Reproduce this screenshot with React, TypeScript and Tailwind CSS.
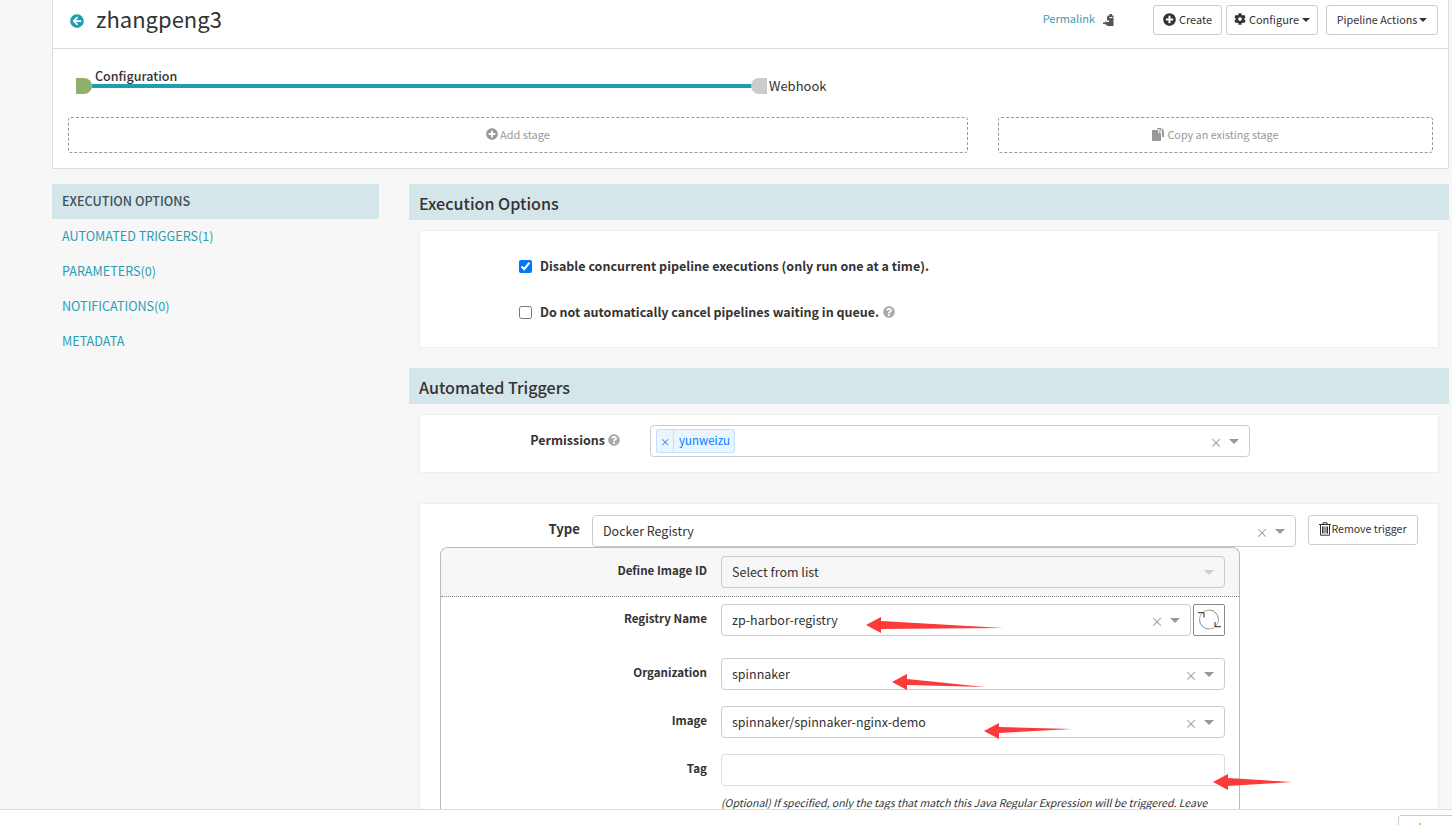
import React from "react";
import { FaArrowCircleLeft, FaPlusCircle, FaCog, FaQuestionCircle } from "react-icons/fa";

const font = { fontFamily: '"Noto Sans CJK SC", "Noto Sans", sans-serif' };

function Clear() {
  return <span className="text-[13px] leading-none text-[#999] w-[10px] flex justify-center">×</span>;
}

function Tri({ light }: { light?: boolean }) {
  return <span className={`w-0 h-0 border-x-[5px] border-x-transparent border-t-[5px] ${light ? "border-t-[#ccc]" : "border-t-[#999]"}`} />;
}

function Caret() {
  return <span className="w-0 h-0 mt-[2px] border-x-[4px] border-x-transparent border-t-[4px] border-t-[#333]" />;
}

function Select({ value, width, disabled, clearable = true }: { value: string; width: string; disabled?: boolean; clearable?: boolean }) {
  return (
    <div className={`${width} h-[32px] shrink-0 flex items-center pl-[10px] pr-[10px] gap-[8px] rounded-[4px] border border-[#ccc] text-[12.5px] text-[#333] ${disabled ? "bg-[#f7f7f7]" : "bg-white"}`}>
      <span className="flex-1 truncate">{value}</span>
      {clearable && <Clear />}
      <Tri light={disabled} />
    </div>
  );
}

function Label({ children, className = "" }: { children: React.ReactNode; className?: string }) {
  return <div className={`text-[11.6px] font-bold text-[#333] text-right ${className}`}>{children}</div>;
}

function Button({ children, className = "" }: { children: React.ReactNode; className?: string }) {
  return (
    <div className={`h-[30px] shrink-0 pb-[2px] flex items-center justify-center rounded-[3px] border border-[#ccc] bg-white text-[11px] text-[#333] ${className}`}>
      {children}
    </div>
  );
}

function SectionHeader({ children }: { children: React.ReactNode }) {
  return <div className="h-[36px] pt-[2px] flex items-center pl-[10px] bg-[#d5e6ea] text-[16.1px] font-medium text-[#333]">{children}</div>;
}

function Card({ children, className = "" }: { children: React.ReactNode; className?: string }) {
  return <div className={`mx-[10px] bg-white border border-[#eee] ${className}`}>{children}</div>;
}

function Trash() {
  return (
    <svg width="12" height="14" viewBox="0 0 12 14" fill="none" stroke="#333" strokeWidth="1">
      <path d="M0 2.5h12M4 2.5V.8h4v1.7M1.5 2.5v10.7h9V2.5M3.5 4.5v7M5 4.5v7M7 4.5v7M8.5 4.5v7" />
    </svg>
  );
}

function Refresh() {
  return (
    <svg width="24" height="24" viewBox="0 0 24 24" fill="none">
      <path d="M12 2a9.5 9.5 0 0 1 9.5 9.5" stroke="#7d8c9c" strokeWidth="1" />
      <path d="M21.5 11.5A9.5 9.5 0 0 1 12 21" stroke="#d9a05b" strokeWidth="1" />
      <path d="M12 21a9.5 9.5 0 0 1-9.5-9.5" stroke="#6a8fb5" strokeWidth="1" />
      <path d="M2.5 11.5A9.5 9.5 0 0 1 12 2" stroke="#d9a05b" strokeWidth="1" />
      <path d="M1 4.7h6v4.8M24 18.7h-6v-4.7" stroke="#223" strokeWidth="1" />
    </svg>
  );
}

function ClipboardArrow() {
  return (
    <svg width="12" height="12" viewBox="0 0 12 12">
      <path d="M5 1.5h1.5V0h2.5v1.5h1.5V12H4V8h2V6.5H4V3z" fill="#555" />
      <path d="M0 8.5h2.5V7L5.5 9.2 2.5 11.4V10H0z" fill="#555" />
      <path d="M6.5 3.5h3" stroke="#fff" strokeWidth="1" />
    </svg>
  );
}

function CopyPages() {
  return (
    <svg width="13" height="13" viewBox="0 0 13 13" fill="#999">
      <path d="M0 2h6v3h3v8H0z" />
      <path d="M6.7 2 9 4.4H6.7z" />
      <path d="M5 0h4v2.6h3V9h-2V4L7 1.3H5z" />
      <path d="M9.7 0 12 2H9.7z" />
    </svg>
  );
}

function Panel() {
  return (
    <div className="bg-white border border-t-0 border-[#ddd]">
      <div className="h-[49px] border-b border-[#ddd] flex items-center pl-[17px] pr-[10px] pb-[8px]">
        <FaArrowCircleLeft className="text-[#209db5] mt-[1px]" size={14} />
        <span className="ml-[12px] text-[22px] text-[#333] leading-none mb-[4px]">zhangpeng3</span>
        <span className="ml-auto text-[11px] text-[#3a9db2] -mt-[4px]">Permalink</span>
        <span className="ml-[8px] mr-[38px] -mt-[1px] flex"><ClipboardArrow /></span>
        <div className="flex">
          <Button className="w-[69px] gap-[3px]"><FaPlusCircle size={13} />Create</Button>
          <Button className="w-[92px] ml-[4px] gap-[3px]"><FaCog size={12} />Configure<Caret /></Button>
          <Button className="w-[112px] ml-[8px] gap-[2px]"><span className="text-[10.8px]">Pipeline Actions</span><Caret /></Button>
        </div>
      </div>
      <div className="relative h-[68px]">
        <span className="absolute left-[42px] top-[18px] text-[12.5px] font-medium leading-[17px] text-[#333]">Configuration</span>
        <span className="absolute left-[23px] top-[29px] w-[16px] h-[16px] bg-[#8fb06d] rounded-r-full" />
        <span className="absolute left-[39px] top-[35px] w-[660px] h-[4px] bg-[#209db5]" />
        <span className="absolute left-[698px] top-[29px] w-[16px] h-[16px] bg-[#ccc] rounded-l-full" />
        <span className="absolute left-[716px] top-[28px] text-[13px] leading-[18px] text-[#333]">Webhook</span>
      </div>
      <div className="flex pl-[15px] pr-[15px] pb-[15px] gap-[30px]">
        <div className="w-[900px] h-[36px] pb-[2px] flex items-center justify-center gap-[2px] rounded-[3px] border border-dashed border-[#999] text-[11px] text-[#999]">
          <FaPlusCircle size={12} />Add stage
        </div>
        <div className="flex-1 h-[36px] pb-[2px] flex items-center justify-center gap-[2px] rounded-[3px] border border-dashed border-[#999] text-[10.8px] text-[#999]">
          <CopyPages />Copy an existing stage
        </div>
      </div>
    </div>
  );
}

function Sidebar() {
  const items = ["AUTOMATED TRIGGERS(1)", "PARAMETERS(0)", "NOTIFICATIONS(0)", "METADATA"];
  return (
    <div className="w-[327px] shrink-0 text-[12.6px]">
      <div className="h-[35px] flex items-center pl-[10px] bg-[#d5e6ea] font-medium text-[#3d4f5c]">EXECUTION OPTIONS</div>
      {items.map((t) => (
        <div key={t} className="h-[35px] flex items-center pl-[10px] text-[#2a9db5]">{t}</div>
      ))}
    </div>
  );
}

function ExecutionOptions() {
  return (
    <>
      <SectionHeader>Execution Options</SectionHeader>
      <Card className="mt-[10px] h-[118px] pl-[99px] pt-[24px] text-[12.5px] font-bold text-[#333]">
        <label className="flex items-center h-[22px] gap-[8px]">
          <input type="checkbox" readOnly checked className="m-0 w-[13px] h-[13px]" />
          Disable concurrent pipeline executions (only run one at a time).
        </label>
        <label className="flex items-center h-[22px] gap-[8px] mt-[24px]">
          <input type="checkbox" readOnly className="m-0 w-[13px] h-[13px]" />
          <span>Do not automatically cancel pipelines waiting in queue.</span>
          <FaQuestionCircle size={12} className="text-[#aaa] -ml-[4px]" />
        </label>
      </Card>
    </>
  );
}

function Permissions() {
  return (
    <Card className="mt-[10px] h-[59px] flex pt-[10px]">
      <Label className="w-[200px] h-[30px] flex items-center justify-end gap-[3px] !text-[12.5px]">
        Permissions<FaQuestionCircle size={12} className="text-[#aaa]" />
      </Label>
      <div className="ml-[30px] w-[600px] h-[32px] flex items-center pl-[5px] pr-[10px] gap-[8px] rounded-[4px] border border-[#ccc] bg-white">
        <div className="h-[24px] flex items-center rounded-[2px] border border-[#c2e0ff] bg-[#ebf5ff] text-[#007eff] text-[11.5px]">
          <span className="w-[17px] h-full flex items-center justify-center border-r border-[#c2e0ff] text-[10px]">×</span>
          <span className="pl-[5px] pr-[4px]">yunweizu</span>
        </div>
        <span className="flex-1" />
        <Clear />
        <Tri />
      </div>
    </Card>
  );
}

function Row({ label, children, className = "" }: { label: string; children: React.ReactNode; className?: string }) {
  return (
    <div className={`flex ${className}`}>
      <Label className="w-[266px] leading-[18px] shrink-0 pt-[5px]">{label}</Label>
      <div className="ml-[14px]">{children}</div>
    </div>
  );
}

function TriggerCard() {
  return (
    <Card className="mt-[30px] h-[340px] overflow-hidden">
      <div className="flex pt-[11px]">
        <Label className="w-[160px] !text-[13.2px] leading-[18px] pt-[5px]">Type</Label>
        <div className="ml-[12px] flex">
          <Select value="Docker Registry" width="w-[704px]" />
          <Button className="ml-[12px] w-[110px]"><Trash /><span className="text-[10.6px]">Remove trigger</span></Button>
        </div>
      </div>
      <div className="ml-[20px] w-[800px] h-[300px] rounded-t-[8px] border border-b-0 border-[#bbb]">
        <div className="h-[49px] pt-[8px] bg-[#f7f7f7] rounded-t-[8px] border-b border-dotted border-[#888]">
          <Row label="Define Image ID">
            <Select value="Select from list" width="w-[504px]" disabled clearable={false} />
          </Row>
        </div>
        <Row label="Registry Name" className="mt-[7px]">
          <div className="flex gap-[2px]">
            <Select value="zp-harbor-registry" width="w-[470px]" />
            <div className="w-[32px] h-[32px] flex items-center justify-center rounded-[2px] border border-[#888]"><Refresh /></div>
          </div>
        </Row>
        <Row label="Organization" className="mt-[22px]">
          <Select value="spinnaker" width="w-[504px]" />
        </Row>
        <Row label="Image" className="mt-[16px]">
          <Select value="spinnaker/spinnaker-nginx-demo" width="w-[504px]" />
        </Row>
        <Row label="Tag" className="mt-[16px]">
          <div className="w-[504px]">
            <div className="h-[32px] rounded-[4px] border border-[#ddd] bg-white" />
            <div className="mt-[9px] text-[10.55px] leading-[16px] italic text-[#333] whitespace-nowrap">
              (Optional) If specified, only the tags that match this Java Regular Expression will be triggered. Leave
            </div>
          </div>
        </Row>
      </div>
    </Card>
  );
}

function Arrows() {
  return (
    <svg className="absolute left-0 top-0 pointer-events-none" width="1452" height="825" fill="#fc3a3a">
      <polygon points="866,625 881,617 881,621 1003,628 881,629 881,633" />
      <polygon points="892,682 907,674 907,679 985,687 907,685 907,690" />
      <polygon points="984,731 999,723 999,727 1072,729 999,733 999,739" />
      <polygon points="1213,782 1228,774 1228,778 1292,782 1228,786 1228,790" />
    </svg>
  );
}

export default function App() {
  return (
    <div className="relative h-[825px] w-full overflow-hidden bg-[#f7f7f7] flex flex-col" style={font}>
      <div className="h-[809px] shrink-0 overflow-hidden pl-[52px] pr-[3px]">
        <Panel />
        <div className="flex mt-[15px]">
          <Sidebar />
          <div className="ml-[30px] flex-1">
            <ExecutionOptions />
            <div className="mt-[20px]"><SectionHeader>Automated Triggers</SectionHeader></div>
            <Permissions />
            <TriggerCard />
          </div>
        </div>
      </div>
      <div className="flex-1 bg-white border-t border-[#ddd] flex justify-end">
        <div className="relative mt-[5px] mr-[-6px] w-[60px] h-[20px] rounded-t-[3px] border border-[#ccc]">
          <span className="absolute left-[20px] top-[7px] w-[2px] h-[2px] bg-[#e8c24a]" />
        </div>
      </div>
      <Arrows />
    </div>
  );
}
